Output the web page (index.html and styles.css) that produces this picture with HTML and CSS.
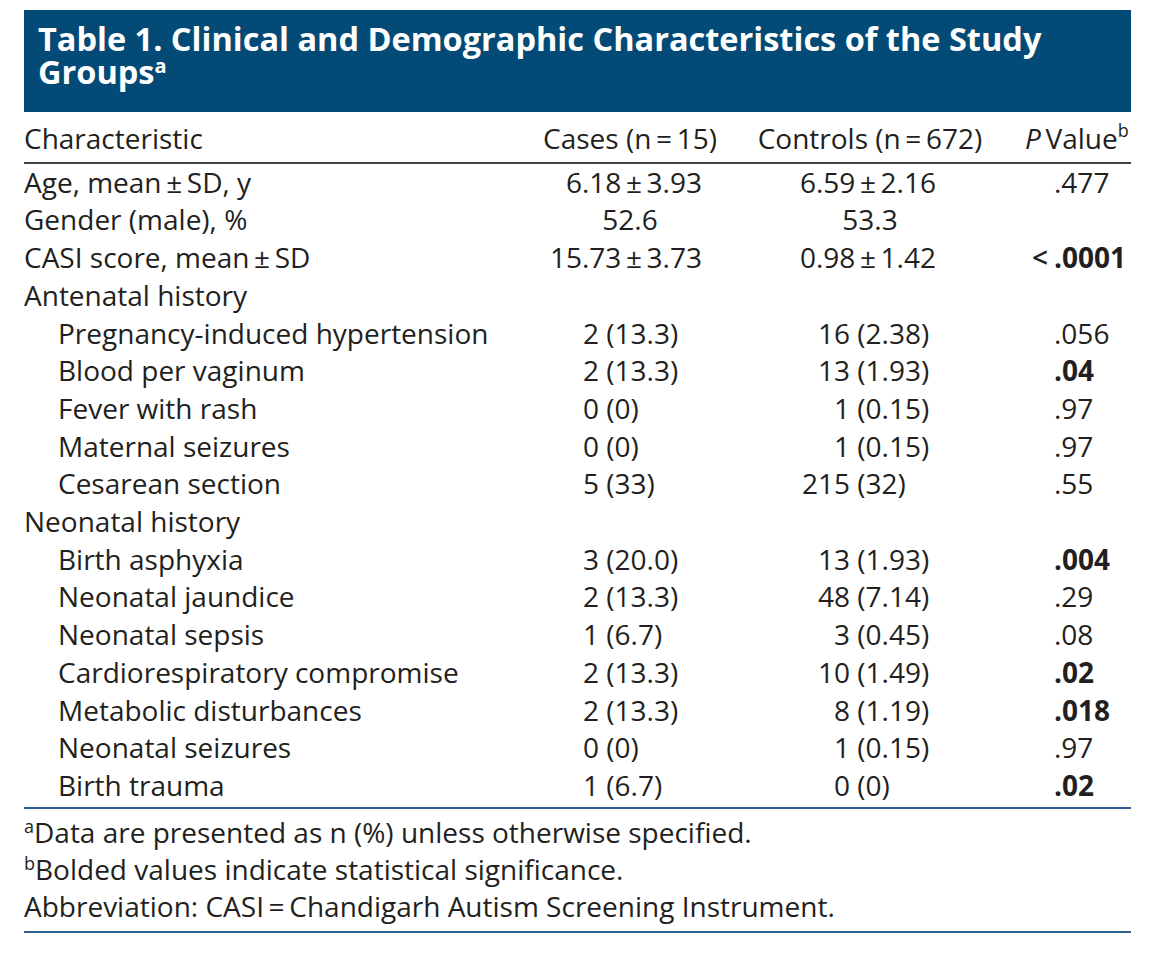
FILE: index.html
```html
<!DOCTYPE html>
<html lang="en">
<head>
<meta charset="utf-8">
<title>Table 1. Clinical and Demographic Characteristics of the Study Groups</title>
<link rel="stylesheet" href="styles.css">
</head>
<body>
<div class="page">
  <div class="title">
    <div class="tline">Table 1. Clinical and Demographic Characteristics of the Study</div>
    <div class="tline">Groups<sup class="tsup">a</sup></div>
  </div>

  <div class="row thead">
    <div class="c1">Characteristic</div>
    <div class="c2 ctr">Cases (n&#8201;=&#8201;15)</div>
    <div class="c3 ctr">Controls (n&#8201;=&#8201;672)</div>
    <div class="c4 ph"><i>P</i>&#8201;Value<sup class="hsup">b</sup></div>
  </div>

  <div class="tbody">
    <div class="row">
      <div class="c1">Age, mean&#8201;±&#8201;SD, y</div>
      <div class="c2 mean">6.18&#8201;±&#8201;3.93</div>
      <div class="c3 mean">6.59&#8201;±&#8201;2.16</div>
      <div class="c4 p">.477</div>
    </div>
    <div class="row">
      <div class="c1">Gender (male), %</div>
      <div class="c2 ctr">52.6</div>
      <div class="c3 ctr">53.3</div>
      <div class="c4 p"></div>
    </div>
    <div class="row">
      <div class="c1">CASI score, mean&#8201;±&#8201;SD</div>
      <div class="c2 mean">15.73&#8201;±&#8201;3.73</div>
      <div class="c3 mean">0.98&#8201;±&#8201;1.42</div>
      <div class="c4 p sig"><span class="lt">&lt;</span>.0001</div>
    </div>
    <div class="row">
      <div class="c1">Antenatal history</div>
      <div class="c2"></div>
      <div class="c3"></div>
      <div class="c4"></div>
    </div>
    <div class="row">
      <div class="c1 sub">Pregnancy-induced hypertension</div>
      <div class="c2 cnt">2 (13.3)</div>
      <div class="c3 cnt"><span class="n">16</span> (2.38)</div>
      <div class="c4 p">.056</div>
    </div>
    <div class="row">
      <div class="c1 sub">Blood per vaginum</div>
      <div class="c2 cnt">2 (13.3)</div>
      <div class="c3 cnt"><span class="n">13</span> (1.93)</div>
      <div class="c4 p sig">.04</div>
    </div>
    <div class="row">
      <div class="c1 sub">Fever with rash</div>
      <div class="c2 cnt">0 (0)</div>
      <div class="c3 cnt"><span class="n">1</span> (0.15)</div>
      <div class="c4 p">.97</div>
    </div>
    <div class="row">
      <div class="c1 sub">Maternal seizures</div>
      <div class="c2 cnt">0 (0)</div>
      <div class="c3 cnt"><span class="n">1</span> (0.15)</div>
      <div class="c4 p">.97</div>
    </div>
    <div class="row">
      <div class="c1 sub">Cesarean section</div>
      <div class="c2 cnt">5 (33)</div>
      <div class="c3 cnt"><span class="n">215</span> (32)</div>
      <div class="c4 p">.55</div>
    </div>
    <div class="row">
      <div class="c1">Neonatal history</div>
      <div class="c2"></div>
      <div class="c3"></div>
      <div class="c4"></div>
    </div>
    <div class="row">
      <div class="c1 sub">Birth asphyxia</div>
      <div class="c2 cnt">3 (20.0)</div>
      <div class="c3 cnt"><span class="n">13</span> (1.93)</div>
      <div class="c4 p sig">.004</div>
    </div>
    <div class="row">
      <div class="c1 sub">Neonatal jaundice</div>
      <div class="c2 cnt">2 (13.3)</div>
      <div class="c3 cnt"><span class="n">48</span> (7.14)</div>
      <div class="c4 p">.29</div>
    </div>
    <div class="row">
      <div class="c1 sub">Neonatal sepsis</div>
      <div class="c2 cnt">1 (6.7)</div>
      <div class="c3 cnt"><span class="n">3</span> (0.45)</div>
      <div class="c4 p">.08</div>
    </div>
    <div class="row">
      <div class="c1 sub">Cardiorespiratory compromise</div>
      <div class="c2 cnt">2 (13.3)</div>
      <div class="c3 cnt"><span class="n">10</span> (1.49)</div>
      <div class="c4 p sig">.02</div>
    </div>
    <div class="row">
      <div class="c1 sub">Metabolic disturbances</div>
      <div class="c2 cnt">2 (13.3)</div>
      <div class="c3 cnt"><span class="n">8</span> (1.19)</div>
      <div class="c4 p sig">.018</div>
    </div>
    <div class="row">
      <div class="c1 sub">Neonatal seizures</div>
      <div class="c2 cnt">0 (0)</div>
      <div class="c3 cnt"><span class="n">1</span> (0.15)</div>
      <div class="c4 p">.97</div>
    </div>
    <div class="row">
      <div class="c1 sub">Birth trauma</div>
      <div class="c2 cnt">1 (6.7)</div>
      <div class="c3 cnt"><span class="n">0</span> (0)</div>
      <div class="c4 p sig">.02</div>
    </div>
  </div>

  <div class="notes">
    <p><sup class="nsup">a</sup>Data are presented as n (%) unless otherwise specified.</p>
    <p><sup class="nsup">b</sup>Bolded values indicate statistical significance.</p>
    <p>Abbreviation: CASI&#8201;=&#8201;Chandigarh Autism Screening Instrument.</p>
  </div>
</div>
</body>
</html>
```

FILE: styles.css
```css
html, body {
  margin: 0;
  padding: 0;
  background: #ffffff;
}

body {
  font-family: "Open Sans", "Noto Sans", "Liberation Sans", sans-serif;
  color: #231f20;
  font-size: 28px;
}

.page {
  width: 1107px;
  margin: 10px 0 0 24px;
}

.title {
  background: #034a76;
  color: #ffffff;
  font-weight: 700;
  font-size: 32.5px;
  padding: 13px 0 24px 14px;
  white-space: nowrap;
}

.tline {
  height: 32.5px;
  line-height: 32.5px;
}

.tsup {
  font-size: 20px;
  line-height: 0;
  vertical-align: 11px;
  font-weight: 700;
}

.row {
  display: grid;
  grid-template-columns: 496px 220px 260px 131px;
  line-height: 37.7px;
  white-space: nowrap;
}

.thead {
  padding: 8px 0 4px;
  border-bottom: 2px solid #444444;
}

.hsup {
  font-size: 18px;
  line-height: 0;
  vertical-align: 12px;
}

.tbody {
  padding-bottom: 2px;
  border-bottom: 2px solid #2c5e8f;
}

.sub {
  padding-left: 34px;
}

.ctr {
  text-align: center;
}

.mean {
  text-align: right;
}

.c2.mean {
  padding-right: 38px;
}

.c3.mean {
  padding-right: 64px;
}

.c2.cnt {
  padding-left: 63px;
}

.c3.cnt {
  padding-left: 50px;
}

.n {
  display: inline-block;
  width: 60px;
  text-align: right;
}

.ph {
  padding-left: 25px;
}

.p {
  padding-left: 54px;
}

.sig {
  font-weight: 700;
}

.lt {
  display: inline-block;
  width: 22px;
  margin-left: -22px;
  font-weight: 600;
}

.notes {
  padding: 5px 0 6px;
  border-bottom: 2px solid #2c5e8f;
}

.notes p {
  margin: 0;
  line-height: 37px;
  white-space: nowrap;
}

.nsup {
  font-size: 18px;
  line-height: 0;
  vertical-align: 10px;
}
```
